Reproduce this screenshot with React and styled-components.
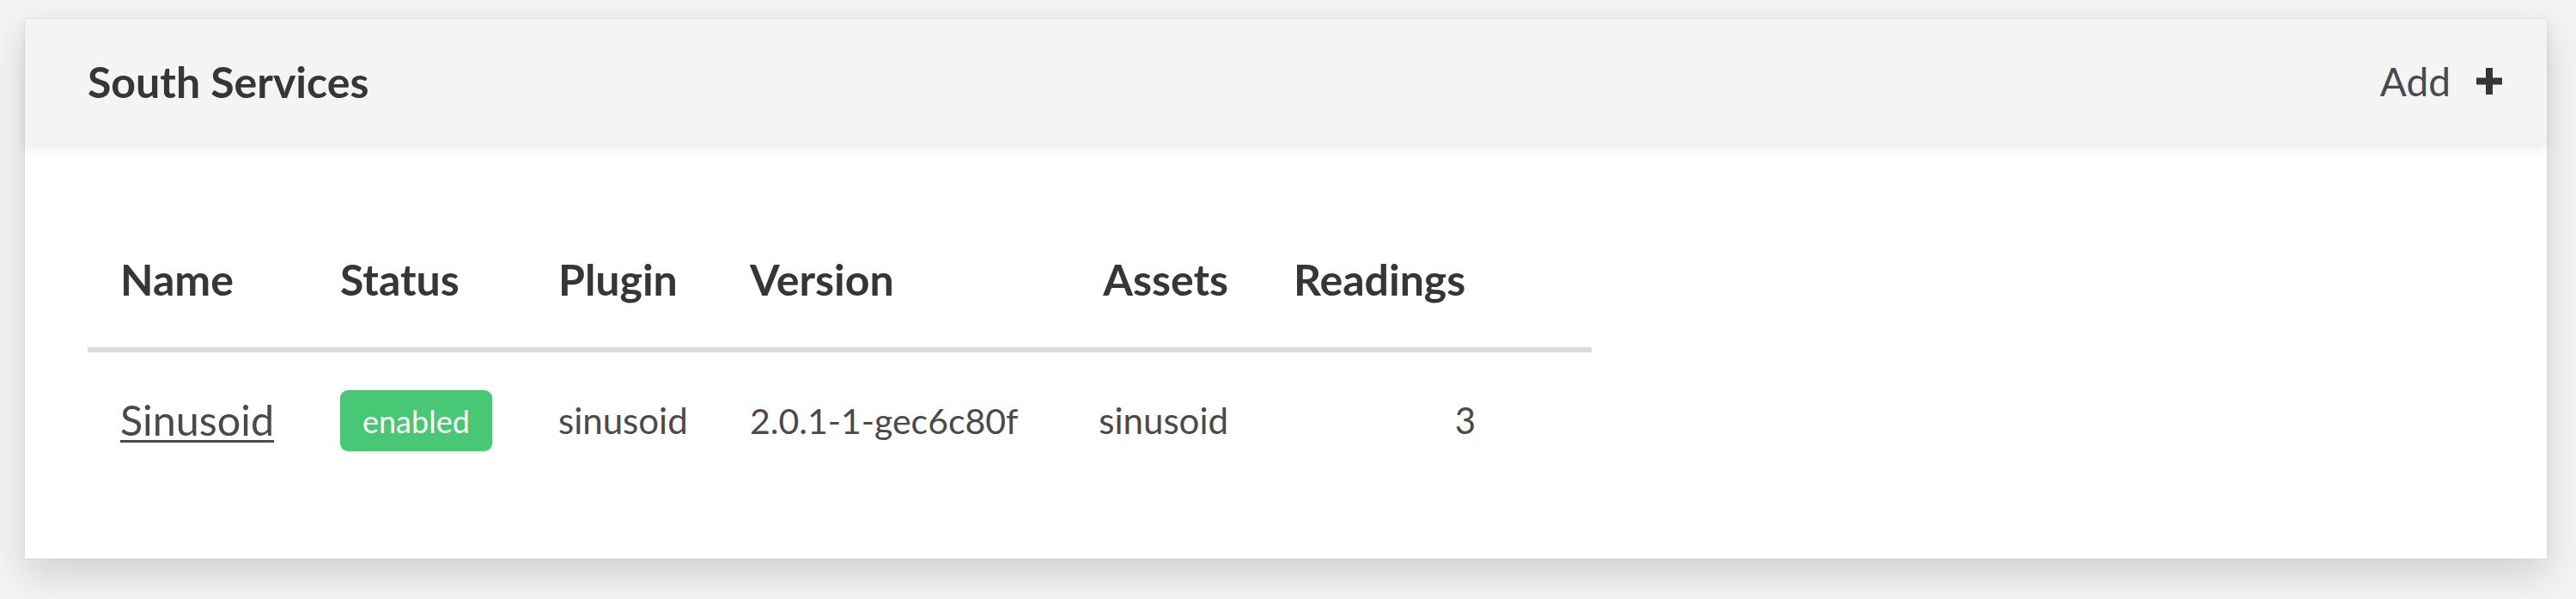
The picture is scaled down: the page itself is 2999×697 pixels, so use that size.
import React from 'react';
import styled, { createGlobalStyle } from 'styled-components';

const GlobalStyle = createGlobalStyle`
  html, body {
    margin: 0;
    padding: 0;
    background: #f3f3f3;
  }
  body {
    font-family: Lato, "Open Sans", sans-serif;
    color: #4a4a4a;
  }
`;

const services = [
  {
    id: 1,
    name: 'Sinusoid',
    enabled: true,
    plugin: 'sinusoid',
    version: '2.0.1-1-gec6c80f',
    assets: 'sinusoid',
    readings: 3,
  },
];

const PlusIcon = () => (
  <svg width="30" height="31" viewBox="0 0 30 31">
    <path d="M15 0v31M0 15.5h30" stroke="#363636" strokeWidth="8" fill="none"/>
  </svg>
);

const App = () => {
  const rows = services.map(service => (
    <tr key={service.id}>
      <Td>
        <NameLink href="#">{service.name}</NameLink>
      </Td>
      <Td>
        <Tag>{service.enabled ? 'enabled' : 'disabled'}</Tag>
      </Td>
      <Td>{service.plugin}</Td>
      <Td $tight>{service.version}</Td>
      <Td $right>{service.assets}</Td>
      <Td $right>{service.readings}</Td>
      <Td/>
    </tr>
  ));

  return (
    <Page>
      <GlobalStyle/>
      <Card>
        <CardHeader>
          <Title>South Services</Title>
          <AddButton>
            Add
            <PlusIcon/>
          </AddButton>
        </CardHeader>
        <CardContent>
          <Table>
            <colgroup>
              <col style={{width: 256}}/>
              <col style={{width: 254}}/>
              <col style={{width: 223}}/>
              <col style={{width: 395}}/>
              <col style={{width: 236}}/>
              <col style={{width: 288}}/>
              <col style={{width: 99}}/>
            </colgroup>
            <thead>
              <tr>
                <Th>Name</Th>
                <Th>Status</Th>
                <Th>Plugin</Th>
                <Th>Version</Th>
                <Th $right>Assets</Th>
                <Th $indent="40px">Readings</Th>
                <Th/>
              </tr>
            </thead>
            <tbody>
              {rows}
            </tbody>
          </Table>
        </CardContent>
      </Card>
    </Page>
  );
};

export default App;

const Page = styled.div`
  box-sizing: border-box;
  min-height: 100vh;
  padding: 22px 34px 44px 29px;
`;

const Card = styled.div`
  background: #ffffff;
  box-shadow: 0 18px 40px rgba(10, 10, 10, 0.14), 0 0 0 1px rgba(10, 10, 10, 0.03);
`;

const CardHeader = styled.header`
  display: flex;
  align-items: center;
  justify-content: space-between;
  height: 145px;
  padding: 0 52px 0 73px;
  background: #f4f4f4;
  box-shadow: 0 6px 12px rgba(10, 10, 10, 0.08);
`;

const Title = styled.h1`
  margin: 0;
  font-size: 50px;
  font-weight: 700;
  color: #363636;
  line-height: 1;
`;

const AddButton = styled.a`
  display: flex;
  align-items: center;
  gap: 30px;
  font-size: 46px;
  color: #4a4a4a;
  cursor: pointer;
`;

const CardContent = styled.div`
  padding: 76px 73px 85px;
`;

const Table = styled.table`
  table-layout: fixed;
  width: 1751px;
  border-collapse: collapse;
`;

const Th = styled.th`
  padding: 48px ${p => p.$right ? '36px' : '0'} 45px ${p => p.$indent || (p.$right ? '0' : '38px')};
  text-align: ${p => p.$right ? 'right' : 'left'};
  font-size: 50px;
  line-height: 68px;
  font-weight: 700;
  color: #363636;
  border-bottom: 6px solid #dbdbdb;
  white-space: nowrap;
`;

const Td = styled.td`
  height: 151px;
  padding: 4px ${p => p.$right ? '36px' : '0'} 0 ${p => p.$right ? '0' : '38px'};
  text-align: ${p => p.$right ? 'right' : 'left'};
  vertical-align: middle;
  font-size: ${p => p.$tight ? '41px' : '42px'};
  line-height: 63px;
  color: #4a4a4a;
  white-space: nowrap;
`;

const NameLink = styled.a`
  font-size: 48.5px;
  color: #4a4a4a;
  text-decoration: underline;
  text-decoration-thickness: 3px;
  text-underline-offset: 5px;
`;

const Tag = styled.span`
  display: inline-flex;
  align-items: center;
  height: 71px;
  padding: 0 26px;
  border-radius: 9px;
  background: #48c774;
  color: #ffffff;
  font-size: 36px;
  line-height: 1;
  vertical-align: middle;
`;
